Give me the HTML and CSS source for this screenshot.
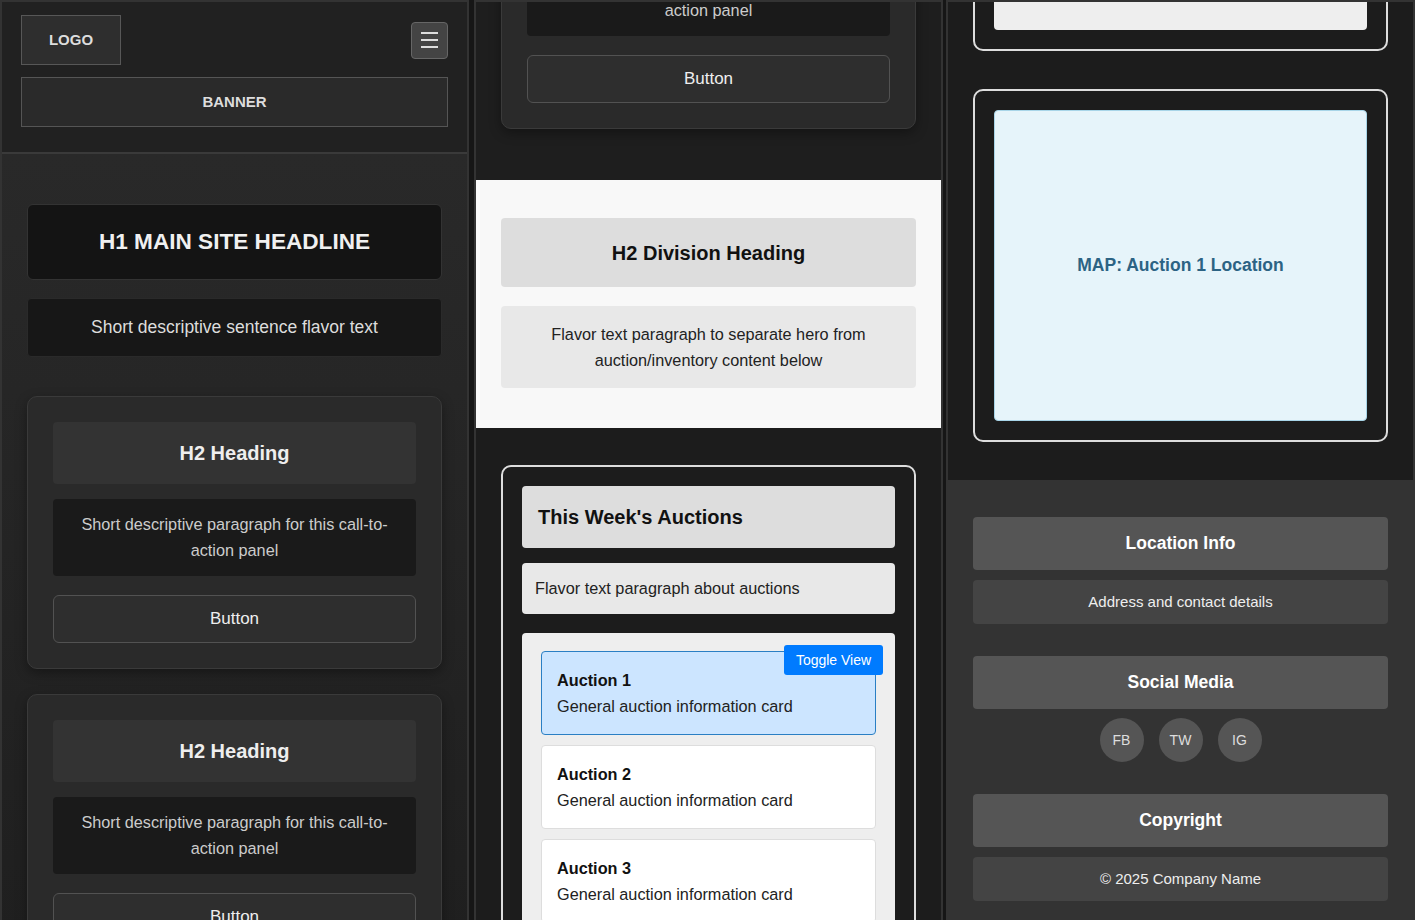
FILE: index.html
```html
<!DOCTYPE html>
<html lang="en">
<head>
<meta charset="utf-8">
<title>Auction site wireframe</title>
<link rel="stylesheet" href="styles.css">
</head>
<body>
<div class="screens">
  <section class="frame">
    <header class="site-header">
      <div class="header-row">
        <div class="logo">LOGO</div>
        <button class="menu-btn" aria-label="Menu">
          <svg width="17" height="16" viewBox="0 0 17 16" fill="#dddddd"><rect x="0" y="0" width="17" height="2"/><rect x="0" y="7" width="17" height="2"/><rect x="0" y="14" width="17" height="2"/></svg>
        </button>
      </div>
      <div class="banner">BANNER</div>
    </header>
    <main class="hero">
      <h1 class="h1-box">H1 MAIN SITE HEADLINE</h1>
      <p class="flavor">Short descriptive sentence flavor text</p>
      <div class="cta-list">
        <article class="cta">
          <h2>H2 Heading</h2>
          <p>Short descriptive paragraph for this call-to-action panel</p>
          <button class="btn">Button</button>
        </article>
        <article class="cta">
          <h2>H2 Heading</h2>
          <p>Short descriptive paragraph for this call-to-action panel</p>
          <button class="btn">Button</button>
        </article>
      </div>
    </main>
  </section>

  <section class="frame frame-mid">
    <div class="tail tail-cta">
      <article class="cta">
        <h2>H2 Heading</h2>
        <p>Short descriptive paragraph for this call-to-action panel</p>
        <button class="btn">Button</button>
      </article>
    </div>
    <section class="division">
      <h2>H2 Division Heading</h2>
      <p>Flavor text paragraph to separate hero from auction/inventory content below</p>
    </section>
    <div class="auctions-wrap">
      <section class="auctions">
        <h2>This Week's Auctions</h2>
        <p class="intro">Flavor text paragraph about auctions</p>
        <div class="auction-list">
          <button class="toggle">Toggle View</button>
          <div class="card active">
            <h3>Auction 1</h3>
            <p>General auction information card</p>
          </div>
          <div class="card">
            <h3>Auction 2</h3>
            <p>General auction information card</p>
          </div>
          <div class="card">
            <h3>Auction 3</h3>
            <p>General auction information card</p>
          </div>
        </div>
      </section>
    </div>
  </section>

  <section class="frame">
    <div class="tail tail-auctions">
      <section class="auctions">
        <div class="auction-list">
          <div class="card">
            <h3>Auction 4</h3>
            <p>General auction information card</p>
          </div>
        </div>
      </section>
    </div>
    <section class="map-section">
      <div class="map">MAP: Auction 1 Location</div>
    </section>
    <footer class="site-footer">
      <div class="foot-group">
        <h3>Location Info</h3>
        <p>Address and contact details</p>
      </div>
      <div class="foot-group">
        <h3>Social Media</h3>
        <div class="social">
          <a href="#">FB</a>
          <a href="#">TW</a>
          <a href="#">IG</a>
        </div>
      </div>
      <div class="foot-group">
        <h3>Copyright</h3>
        <p>© 2025 Company Name</p>
      </div>
    </footer>
  </section>
</div>
</body>
</html>
```

FILE: styles.css
```css
* {
  box-sizing: border-box;
  margin: 0;
  padding: 0;
}

html,
body {
  height: 920px;
  overflow: hidden;
}

body {
  background: #161616;
  font-family: "Liberation Sans", Arial, sans-serif;
  color: #dddddd;
}

.screens {
  display: grid;
  grid-template-columns: 469px 469px 469px;
  column-gap: 4px;
  height: 920px;
}

.frame {
  border: 2px solid #333333;
  border-bottom: none;
  height: 920px;
  overflow: hidden;
  background: #1c1c1c;
}

.frame-mid {
  margin-left: 1px;
  margin-right: -1px;
}

/* Header */
.site-header {
  background: #212121;
  padding: 13px 19px 25px;
  border-bottom: 2px solid #3a3a3a;
}

.header-row {
  display: flex;
  justify-content: space-between;
  align-items: center;
}

.logo {
  width: 100px;
  height: 50px;
  border: 1px solid #575757;
  background: #2e2e2e;
  display: flex;
  align-items: center;
  justify-content: center;
  padding-bottom: 2px;
  font-weight: bold;
  font-size: 15px;
  color: #dddddd;
}

.menu-btn {
  width: 37px;
  height: 37px;
  background: #444444;
  border: 1px solid #666666;
  border-radius: 4px;
  display: flex;
  align-items: center;
  justify-content: center;
}

.banner {
  margin-top: 12px;
  height: 50px;
  border: 1px solid #555555;
  background: #2a2a2a;
  display: flex;
  align-items: center;
  justify-content: center;
  padding-bottom: 2px;
  font-weight: bold;
  font-size: 15px;
  color: #dddddd;
}

/* Hero */
.hero {
  background: linear-gradient(#292929, #1e1e1e);
  padding: 50px 25px 52px;
}

.h1-box {
  background: #141414;
  border: 1px solid #333333;
  border-radius: 6px;
  padding: 22px;
  font-size: 22.6px;
  line-height: 30px;
  text-align: center;
  color: #f0f0f0;
}

.flavor {
  margin-top: 18px;
  background: #171717;
  border: 1px solid #2a2a2a;
  border-radius: 4px;
  padding: 16px;
  font-size: 17.5px;
  line-height: 25px;
  text-align: center;
  color: #dddddd;
}

.cta-list {
  margin-top: 39px;
  display: flex;
  flex-direction: column;
  gap: 25px;
}

.cta {
  background: #2a2a2a;
  border: 1px solid #3a3a3a;
  border-radius: 10px;
  padding: 25px;
  box-shadow: 0 4px 12px rgba(0, 0, 0, 0.35);
}

.cta h2 {
  background: #333333;
  border-radius: 4px;
  padding: 18px;
  font-size: 20px;
  line-height: 26px;
  text-align: center;
  color: #eeeeee;
}

.cta p {
  margin-top: 15px;
  background: #1a1a1a;
  border-radius: 4px;
  padding: 12px 20px 13px;
  font-size: 16.25px;
  line-height: 26px;
  text-align: center;
  color: #cccccc;
}

.cta .btn {
  margin-top: 19px;
  display: block;
  width: 100%;
  height: 48px;
  background: #2e2e2e;
  border: 1px solid #525252;
  border-radius: 6px;
  font-family: "Liberation Sans", Arial, sans-serif;
  font-size: 17px;
  color: #eeeeee;
}

/* Clipped tails of content continuing from the previous screen */
.tail {
  display: flex;
  flex-direction: column;
  justify-content: flex-end;
  overflow: hidden;
}

.tail-cta {
  height: 178px;
  padding: 0 25px 51px;
  background: #1e1e1e;
}

.tail-auctions {
  height: 49px;
  padding: 0 25px;
}

/* Division */
.division {
  background: #f8f8f8;
  padding: 38px 25px 40px;
}

.division h2 {
  background: #dddddd;
  border-radius: 4px;
  padding: 22px 21px 20px;
  font-size: 20px;
  line-height: 27px;
  text-align: center;
  color: #111111;
}

.division p {
  margin-top: 19px;
  background: #e8e8e8;
  border-radius: 4px;
  padding: 15px 40px;
  font-size: 16.25px;
  line-height: 26px;
  text-align: center;
  color: #222222;
}

/* Auctions */
.auctions-wrap {
  padding: 37px 25px 0;
}

.auctions {
  border: 2px solid #dddddd;
  border-radius: 10px;
  padding: 19px;
  background: #1c1c1c;
}

.auctions h2 {
  background: #dddddd;
  border-radius: 4px;
  padding: 0 16px;
  height: 62px;
  line-height: 62px;
  font-size: 20px;
  color: #111111;
}

.auctions .intro {
  margin-top: 15px;
  background: #e8e8e8;
  border-radius: 4px;
  padding: 12px 13px 13px;
  font-size: 16.25px;
  line-height: 26px;
  color: #222222;
}

.auction-list {
  margin-top: 19px;
  background: #eeeeee;
  border-radius: 4px;
  padding: 18px 19px 20px;
  position: relative;
}

.tail-auctions .auction-list {
  margin-top: 0;
}

.card {
  background: #ffffff;
  border: 1px solid #dddddd;
  border-radius: 4px;
  padding: 15px;
  margin-bottom: 10px;
  font-size: 16.25px;
  line-height: 26px;
  color: #222222;
}

.card.active {
  background: #cce5ff;
  border-color: #2a7fc4;
}

.card h3 {
  font-size: 16.25px;
  line-height: 26px;
  color: #111111;
}

.toggle {
  position: absolute;
  top: 12px;
  right: 12px;
  width: 99px;
  height: 30px;
  background: #007bff;
  color: #ffffff;
  border: none;
  border-radius: 3px;
  font-family: "Liberation Sans", Arial, sans-serif;
  font-size: 14px;
  z-index: 1;
}

/* Map */
.map-section {
  margin: 38px 25px 0;
  border: 2px solid #dddddd;
  border-radius: 10px;
  padding: 19px;
}

.map {
  height: 311px;
  background: #e6f4fa;
  border: 1px solid #a8d5e8;
  border-radius: 4px;
  display: flex;
  align-items: center;
  justify-content: center;
  font-weight: bold;
  font-size: 17.5px;
  color: #2c6384;
}

/* Footer */
.site-footer {
  margin-top: 38px;
  background: #333333;
  padding: 37px 25px 40px;
}

.foot-group + .foot-group {
  margin-top: 32px;
}

.site-footer h3 {
  background: #555555;
  border-radius: 4px;
  padding: 16px;
  font-size: 17.5px;
  line-height: 21px;
  text-align: center;
  color: #ffffff;
}

.site-footer p {
  margin-top: 10px;
  background: #444444;
  border-radius: 4px;
  padding: 12px;
  font-size: 15px;
  line-height: 20px;
  text-align: center;
  color: #eeeeee;
}

.social {
  margin-top: 9px;
  display: flex;
  justify-content: center;
  gap: 15px;
}

.social a {
  width: 44px;
  height: 44px;
  border-radius: 50%;
  background: #555555;
  display: flex;
  align-items: center;
  justify-content: center;
  font-size: 14px;
  color: #dddddd;
  text-decoration: none;
}
```
